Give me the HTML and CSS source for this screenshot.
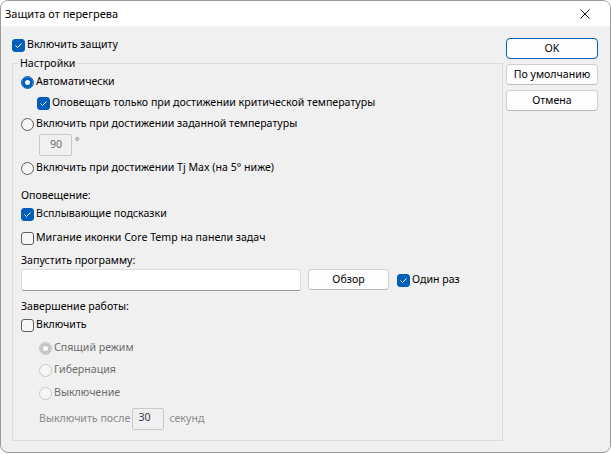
FILE: index.html
```html
<!DOCTYPE html>
<html lang="ru">
<head>
<meta charset="utf-8">
<title>Защита от перегрева</title>
<link rel="stylesheet" href="styles.css">
</head>
<body>
<div class="window">
  <header class="titlebar">
    <span class="title">Защита от перегрева</span>
    <span class="close"><svg width="10" height="10" viewBox="0 0 10 10"><path d="M0.5 0.5L9.5 9.5M9.5 0.5L0.5 9.5" stroke="#1b1b1b" stroke-width="1" fill="none"/></svg></span>
  </header>
  <div class="content">
    <div class="main">
      <div class="row"><span class="box on"><svg width="11" height="11" viewBox="0 0 11 11"><path d="M2.5 5.5L4.5 7.5L8.5 3.5" stroke="#fff" stroke-width="1" fill="none"/></svg></span><span class="t">Включить защиту</span></div>
      <fieldset class="group">
        <legend>Настройки</legend>
        <div class="row mt1"><span class="radio on"></span><span class="t">Автоматически</span></div>
        <div class="row mt1 indent"><span class="box on"><svg width="11" height="11" viewBox="0 0 11 11"><path d="M2.5 5.5L4.5 7.5L8.5 3.5" stroke="#fff" stroke-width="1" fill="none"/></svg></span><span class="t">Оповещать только при достижении критической температуры</span></div>
        <div class="row mt1"><span class="radio"></span><span class="t">Включить при достижении заданной температуры</span></div>
        <div class="row-field indent2"><span class="field small">90</span><span class="degree">°</span></div>
        <div class="row mt2"><span class="radio"></span><span class="t">Включить при достижении Tj Max (на 5° ниже)</span></div>
        <div class="label mt10">Оповещение:</div>
        <div class="row"><span class="box on"><svg width="11" height="11" viewBox="0 0 11 11"><path d="M2.5 5.5L4.5 7.5L8.5 3.5" stroke="#fff" stroke-width="1" fill="none"/></svg></span><span class="t">Всплывающие подсказки</span></div>
        <div class="row mt4"><span class="box"></span><span class="t">Мигание иконки Core Temp на панели задач</span></div>
        <div class="label mt5">Запустить программу:</div>
        <div class="row-field">
          <span class="field wide"></span>
          <button class="btn browse">Обзор</button>
          <span class="row once"><span class="box on"><svg width="11" height="11" viewBox="0 0 11 11"><path d="M2.5 5.5L4.5 7.5L8.5 3.5" stroke="#fff" stroke-width="1" fill="none"/></svg></span><span class="t">Один раз</span></span>
        </div>
        <div class="label mt8">Завершение работы:</div>
        <div class="row"><span class="box"></span><span class="t">Включить</span></div>
        <div class="row mt3 indent2 disabled"><span class="radio dis on"></span><span class="t">Спящий режим</span></div>
        <div class="row mt2 indent2 disabled"><span class="radio dis"></span><span class="t">Гибернация</span></div>
        <div class="row mt3 indent2 disabled"><span class="radio dis"></span><span class="t">Выключение</span></div>
        <div class="row-field mt5 indent2 faint"><span class="after">Выключить после</span><span class="field tiny">30</span><span class="sec">секунд</span></div>
      </fieldset>
    </div>
    <div class="buttons">
      <button class="btn default">OK</button>
      <button class="btn">По умолчанию</button>
      <button class="btn">Отмена</button>
    </div>
  </div>
</div>
</body>
</html>
```

FILE: styles.css
```css
html, body {
  margin: 0;
  padding: 0;
  background: #ffffff;
}

body {
  font-family: "Noto Sans", "Open Sans", sans-serif;
  font-size: 10.6px;
  color: #000;
}

.window {
  width: 611px;
  height: 453px;
  box-sizing: border-box;
  border: 1px solid #9b9b9b;
  border-radius: 8px;
  overflow: hidden;
  background: #f0f0f0;
  display: flex;
  flex-direction: column;
}

.titlebar {
  height: 25px;
  flex: none;
  background: #ffffff;
  display: flex;
  align-items: center;
  justify-content: space-between;
  padding-left: 4px;
}

.title {
  font-size: 11px;
  color: #000;
  margin-bottom: 1px;
}

.close {
  width: 46px;
  height: 25px;
  display: flex;
  align-items: center;
  justify-content: center;
  margin-right: 2px;
}

.content {
  display: flex;
  padding: 9px 0 0 11px;
}

.main {
  width: 491px;
  display: flex;
  flex-direction: column;
}

.row {
  display: flex;
  align-items: center;
  height: 20px;
  white-space: nowrap;
}

.row .t {
  margin-bottom: 2px;
}

.label {
  height: 16px;
  line-height: 14px;
  white-space: nowrap;
}

.row-field {
  display: flex;
  align-items: flex-start;
  white-space: nowrap;
}

.mt1 { margin-top: 1px; }
.mt2 { margin-top: 2px; }
.mt3 { margin-top: 3px; }
.mt4 { margin-top: 4px; }
.mt5 { margin-top: 5px; }
.mt8 { margin-top: 8px; }
.mt10 { margin-top: 10px; }

.indent { margin-left: 16px; }
.indent2 { margin-left: 18px; }

.box {
  width: 13px;
  height: 13px;
  box-sizing: border-box;
  border: 1px solid #5f5f5f;
  border-radius: 3px;
  background: #f6f6f6;
  margin-right: 2px;
  flex: none;
  display: flex;
}

.box.on {
  background: #005fb8;
  border-color: #005fb8;
}

.radio {
  width: 13px;
  height: 13px;
  box-sizing: border-box;
  border: 1px solid #5f5f5f;
  border-radius: 50%;
  background: #f6f6f6;
  margin-right: 2px;
  flex: none;
}

.radio.on {
  background: #ffffff;
  border-color: #005fb8;
  box-shadow: inset 0 0 0 3px #005fb8;
}

.radio.dis {
  border-color: #c8c8c8;
  background: #f6f6f6;
}

.radio.dis.on {
  border-color: #c2c2c2;
  background: #ffffff;
  box-shadow: inset 0 0 0 3px #c6c6c6;
}

.disabled {
  color: #6d6d6d;
}

.group {
  margin: 1px 0 0 0;
  padding: 1px 8px 10px 8px;
  border: 1px solid #dcdcdc;
  width: 491px;
  box-sizing: border-box;
  min-inline-size: 0;
}

.group legend {
  padding: 0 2px;
  margin-left: -3px;
  line-height: 14px;
}

.field {
  box-sizing: border-box;
  height: 22px;
  border: 1px solid #c9c9c9;
  border-radius: 2px;
  background: #f0f0f0;
  display: flex;
  align-items: center;
}

.field.small {
  width: 33px;
  padding-left: 10px;
  padding-bottom: 2px;
  color: #6d6d6d;
}

.degree {
  margin-left: 3px;
  margin-top: 1px;
  line-height: 12px;
  color: #6d6d6d;
  font-size: 10px;
}

.field.wide {
  width: 280px;
  background: #ffffff;
  border: 1px solid #dcdcdc;
  border-bottom-color: #9a9a9a;
  border-radius: 3px;
}

.field.tiny {
  width: 32px;
  padding-left: 5px;
  color: #353a55;
  align-items: flex-start;
  padding-top: 1px;
  line-height: 14px;
}

.faint {
  color: #8a8a8a;
}

.after {
  line-height: 20px;
  margin-right: 2px;
}

.sec {
  line-height: 20px;
  margin-left: 5px;
}

.btn {
  font-family: "Noto Sans", "Open Sans", sans-serif;
  font-size: 10.6px;
  color: #000;
  height: 21px;
  box-sizing: border-box;
  border: 1px solid #d0d0d0;
  border-bottom-color: #bcbcbc;
  border-radius: 4px;
  background: #fdfdfd;
  padding: 0 0 2px 0;
  margin: 0;
  line-height: 16px;
}

.btn.browse {
  width: 81px;
  margin-left: 7px;
}

.once {
  margin-left: 8px;
  height: 22px;
}

.buttons {
  width: 92px;
  margin-left: 3px;
  margin-top: 3px;
  display: flex;
  flex-direction: column;
  gap: 5px;
}

.buttons .btn {
  width: 92px;
}

.btn.default {
  border-color: #005fb8;
}
```
